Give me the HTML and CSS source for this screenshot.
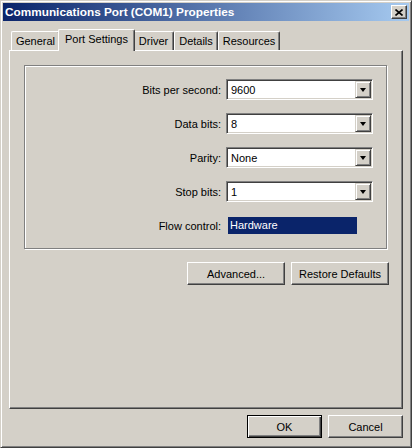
FILE: index.html
```html
<!DOCTYPE html>
<html lang="en">
<head>
  <meta charset="UTF-8" />
  <meta name="viewport" content="width=device-width, initial-scale=1.0"/>
  <link rel="stylesheet" href="styles.css">
  <title>Communications Port (COM1) Properties</title>
</head>
<body>
  <div class="window">
    <div class="titlebar">
      <span class="title">Communications Port (COM1) Properties</span>
      <div class="close-btn">
        <svg width="8" height="7" viewBox="0 0 8 7">
          <path d="M0.5 0.5 L7.5 6.5 M7.5 0.5 L0.5 6.5" stroke="#000" stroke-width="1.6" fill="none"/>
        </svg>
      </div>
    </div>

    <div class="body">
      <div class="tabs">
        <div class="tab tab-general">General</div>
        <div class="tab tab-port active">Port Settings</div>
        <div class="tab tab-driver">Driver</div>
        <div class="tab tab-details">Details</div>
        <div class="tab tab-resources">Resources</div>
      </div>

      <div class="panel">
        <div class="group">
          <div class="row">
            <label>Bits per second:</label>
            <div class="combo"><span class="value">9600</span><span class="drop"><i class="arrow"></i></span></div>
          </div>
          <div class="row">
            <label>Data bits:</label>
            <div class="combo"><span class="value">8</span><span class="drop"><i class="arrow"></i></span></div>
          </div>
          <div class="row">
            <label>Parity:</label>
            <div class="combo"><span class="value">None</span><span class="drop"><i class="arrow"></i></span></div>
          </div>
          <div class="row">
            <label>Stop bits:</label>
            <div class="combo"><span class="value">1</span><span class="drop"><i class="arrow"></i></span></div>
          </div>
          <div class="row">
            <label>Flow control:</label>
            <div class="flow"><span class="selected">Hardware</span></div>
          </div>
        </div>

        <div class="panel-buttons">
          <button class="btn wide">Advanced...</button>
          <button class="btn wide">Restore Defaults</button>
        </div>
      </div>

      <div class="footer">
        <button class="btn default">OK</button>
        <button class="btn">Cancel</button>
      </div>
    </div>
  </div>
</body>
</html>
```

FILE: styles.css
```css
* {
  box-sizing: border-box;
}

body {
  margin: 0;
  font-family: "Liberation Sans", Arial, sans-serif;
  font-size: 11px;
  color: #000;
  background: #d4d0c8;
}

.window {
  width: 412px;
  height: 448px;
  padding: 2px;
  background: #d4d0c8;
  border: 1px solid;
  border-color: #d4d0c8 #404040 #404040 #d4d0c8;
  box-shadow: inset 1px 1px #fff, inset -1px -1px #808080;
}

.titlebar {
  height: 18px;
  display: flex;
  align-items: center;
  justify-content: space-between;
  padding: 0 2px 0 2px;
  background: linear-gradient(to right, #0a246a, #a6caf0);
}

.title {
  color: #fff;
  font-weight: bold;
  font-size: 11.8px;
}

.close-btn {
  width: 16px;
  height: 14px;
  display: flex;
  align-items: center;
  justify-content: center;
  background: #d4d0c8;
  border: 1px solid;
  border-color: #fff #404040 #404040 #fff;
  box-shadow: inset -1px -1px #808080;
}

.body {
  padding: 0 6px;
}

.tabs {
  display: flex;
  align-items: flex-end;
  height: 21px;
  margin-top: 8px;
  padding-left: 2px;
}

.tab {
  height: 19px;
  display: flex;
  align-items: center;
  justify-content: center;
  border-top: 1px solid #fff;
  border-left: 1px solid #fff;
  border-right: 1px solid #404040;
  border-radius: 2px 2px 0 0;
  box-shadow: inset -1px 0 #808080;
  padding-bottom: 1px;
}

.tab-general { width: 49px; }
.tab-port { width: 77px; }
.tab-driver { width: 41px; }
.tab-details { width: 44px; }
.tab-resources { width: 62px; }

.tab.active {
  position: relative;
  z-index: 1;
  height: 22px;
  margin: 0 -2px -1px -2px;
  padding-bottom: 4px;
  background: #d4d0c8;
}

.panel {
  height: 359px;
  padding: 14px 13px 0 14px;
  border: 1px solid;
  border-color: #fff #404040 #404040 #fff;
  box-shadow: inset -1px -1px #808080;
}

.group {
  height: 184px;
  margin-right: 2px;
  padding: 13px 13px 0 0;
  border: 1px solid #808080;
  box-shadow: inset 1px 1px #fff, 1px 1px #fff;
  display: flex;
  flex-direction: column;
  gap: 13px;
}

.row {
  display: grid;
  grid-template-columns: 1fr 147px;
  column-gap: 5px;
  align-items: center;
  height: 21px;
}

.row label {
  text-align: right;
}

.combo {
  height: 21px;
  display: flex;
  align-items: center;
  background: #fff;
  border: 1px solid;
  border-color: #808080 #fff #fff #808080;
  box-shadow: inset 1px 1px #404040, inset -1px -1px #d4d0c8;
  padding: 1px;
}

.combo .value {
  flex: 1;
  padding-left: 3px;
}

.drop {
  width: 16px;
  height: 17px;
  display: flex;
  align-items: center;
  justify-content: center;
  background: #d4d0c8;
  border: 1px solid;
  border-color: #d4d0c8 #404040 #404040 #d4d0c8;
  box-shadow: inset 1px 1px #fff, inset -1px -1px #808080;
}

.arrow {
  width: 0;
  height: 0;
  border-left: 3.5px solid transparent;
  border-right: 3.5px solid transparent;
  border-top: 4px solid #000;
  margin-top: 1px;
}

.flow {
  padding-left: 2px;
}

.selected {
  display: block;
  width: 129px;
  height: 17px;
  line-height: 17px;
  padding-left: 2px;
  background: #0a246a;
  color: #fff;
}

.panel-buttons {
  display: flex;
  justify-content: flex-end;
  gap: 6px;
  margin-top: 13px;
}

.btn {
  width: 75px;
  height: 23px;
  padding: 0;
  font-family: inherit;
  font-size: 11px;
  color: #000;
  background: #d4d0c8;
  border: 1px solid;
  border-color: #fff #404040 #404040 #fff;
  box-shadow: inset -1px -1px #808080;
}

.btn.wide {
  width: 98px;
}

.btn.default {
  border: 1px solid #000;
  box-shadow: inset 1px 1px #fff, inset -1px -1px #404040, inset -2px -2px #808080;
}

.footer {
  display: flex;
  justify-content: flex-end;
  gap: 6px;
  margin-top: 6px;
}
```
